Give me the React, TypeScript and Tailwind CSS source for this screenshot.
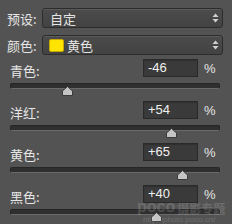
import React from 'react';

const cjk = "font-['Noto_Sans_CJK_SC','Noto_Sans',sans-serif]";
const num = "font-['Liberation_Sans',Arial,sans-serif]";

type Row = { label: string; value: string; pos: number };

const rows: Row[] = [
  { label: '青色', value: '-46', pos: -46 },
  { label: '洋红', value: '+54', pos: 54 },
  { label: '黄色', value: '+65', pos: 65 },
  { label: '黑色', value: '+40', pos: 40 },
];

const Arrows: React.FC = () => (
  <svg width="7" height="10" viewBox="0 0 7 10" className="shrink-0">
    <polygon points="3.5,0.5 6.5,4 0.5,4" fill="#d0d0d0" />
    <polygon points="0.5,6 6.5,6 3.5,9.5" fill="#d0d0d0" />
  </svg>
);

const Select: React.FC<{ children: React.ReactNode }> = ({ children }) => (
  <div className="flex-1 h-[20px] flex items-center justify-between rounded-[3px] border border-[#2c2c2c] bg-gradient-to-b from-[#4b4b4b] to-[#434343] shadow-[inset_0_1px_0_#5a5a5a] pl-[7px] pr-[3px]">
    <div className="flex items-center gap-[3px] text-[13px] text-[#e4e4e4] leading-none">{children}</div>
    <Arrows />
  </div>
);

const Slider: React.FC<{ row: Row }> = ({ row }) => {
  const pct = (row.pos + 100) / 200;
  return (
    <div className="h-[42px] flex flex-col">
      <div className="flex items-center h-[18px] mt-[1px]">
        <span className={`${cjk} text-[13px] text-[#e6e6e6] leading-none pl-[10px] w-[143px] pt-[4px]`}>
          {row.label}:
        </span>
        <div className={`${num} w-[55px] h-[18px] bg-[#3a3a3a] border border-[#2a2a2a] shadow-[inset_0_1px_1px_#303030] text-[13px] text-[#f0f0f0] leading-[16px] pl-[4px]`}>
          {row.value}
        </div>
        <span className={`${num} text-[13px] text-[#e6e6e6] leading-none ml-[6px]`}>%</span>
      </div>
      <div className="relative mt-[6px] mx-[10px] w-[210px] h-[6px] rounded-[2px] bg-[#2f2f2f] border border-[#262626] border-b-[#6a6a6a]">
        <svg
          width="11"
          height="10"
          viewBox="0 0 11 10"
          className="absolute top-[2px]"
          style={{ left: `${pct * 208 - 5.5}px` }}
        >
          <polygon points="5.5,0.5 10.5,5 10.5,9.5 0.5,9.5 0.5,5" fill="#c4c4c4" stroke="#3a3a3a" strokeWidth="1" />
        </svg>
      </div>
    </div>
  );
};

const App: React.FC = () => {
  return (
    <div className={`${cjk} w-[232px] h-[224px] bg-[#535353] relative overflow-hidden pt-[8px]`}>
      <div className="flex items-center pl-[7px] pr-[9px]">
        <span className="w-[35px] text-[13px] text-[#e6e6e6] leading-none">预设:</span>
        <Select>
          <span>自定</span>
        </Select>
      </div>
      <div className="flex items-center pl-[7px] pr-[9px] mt-[7px]">
        <span className="w-[35px] text-[13px] text-[#e6e6e6] leading-none">颜色:</span>
        <Select>
          <span className="w-[15px] h-[13px] rounded-[2px] bg-[#ffe400] border border-[#c9a800] -ml-[1px]" />
          <span>黄色</span>
        </Select>
      </div>
      <div className="mt-[3px]">
        {rows.map(r => (
          <Slider key={r.label} row={r} />
        ))}
      </div>
      {/* faint watermark over the bottom right */}
      <div className="absolute left-[137px] top-[199px] flex flex-col leading-none pointer-events-none opacity-[0.14] text-white">
        <div className="flex items-end gap-[2px]">
          <span className={`${num} text-[16px] font-bold`}>poco</span>
          <span className="text-[12px] font-bold">摄影专题</span>
        </div>
        <span className={`${num} text-[8px] mt-[1px] ml-[6px]`}>http://photo.poco.cn/</span>
      </div>
    </div>
  );
};

export default App;
